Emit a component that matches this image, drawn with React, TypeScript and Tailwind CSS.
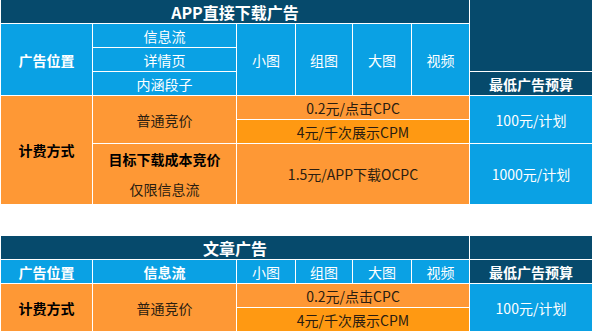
import React from 'react'

const cell = 'flex items-center justify-center text-center leading-none'
const dark = 'bg-[#064a6c] text-white'
const blue = 'bg-[#0aa1e4] text-white'
const orange = 'bg-[#fe9835] text-[#2b1d10]'
const orangeDeep = 'bg-[#ff9912] text-[#2b1d10]'

const cols = 'grid-cols-[91px_143px_58px_56px_58px_57px_122px]'

function AppDownloadTable() {
    return (
        <div className={`ml-px grid ${cols} grid-rows-[23px_23px_23px_23px_23px_23px_60px] gap-px bg-white`}>
            {/* header */}
            <div className={`${cell} ${dark} col-start-1 col-span-6 row-start-1 text-[16px] font-bold`}>APP直接下载广告</div>
            <div className={`${cell} ${dark} col-start-7 row-start-1 row-span-3`} />

            <div className={`${cell} ${blue} col-start-1 row-start-2 row-span-3 font-bold`}>广告位置</div>
            <div className={`${cell} ${blue} col-start-2 row-start-2`}>信息流</div>
            <div className={`${cell} ${blue} col-start-2 row-start-3`}>详情页</div>
            <div className={`${cell} ${blue} col-start-2 row-start-4`}>内涵段子</div>
            <div className={`${cell} ${blue} col-start-3 row-start-2 row-span-3`}>小图</div>
            <div className={`${cell} ${blue} col-start-4 row-start-2 row-span-3`}>组图</div>
            <div className={`${cell} ${blue} col-start-5 row-start-2 row-span-3`}>大图</div>
            <div className={`${cell} ${blue} col-start-6 row-start-2 row-span-3`}>视频</div>
            <div className={`${cell} ${dark} col-start-7 row-start-4 font-bold`}>最低广告预算</div>

            {/* pricing */}
            <div className={`${cell} ${orange} col-start-1 row-start-5 row-span-3 font-bold text-black`}>计费方式</div>
            <div className={`${cell} ${orange} col-start-2 row-start-5 row-span-2`}>普通竞价</div>
            <div className={`${cell} ${orange} col-start-3 col-span-4 row-start-5`}>0.2元/点击CPC</div>
            <div className={`${cell} ${orangeDeep} col-start-3 col-span-4 row-start-6`}>4元/千次展示CPM</div>
            <div className={`${cell} ${blue} col-start-7 row-start-5 row-span-2`}>100元/计划</div>

            <div className={`${cell} ${orange} col-start-2 row-start-7 flex-col gap-4`}>
                <span className="font-bold text-black leading-[14px]">目标下载成本竞价</span>
                <span className="leading-[14px]">仅限信息流</span>
            </div>
            <div className={`${cell} ${orange} col-start-3 col-span-4 row-start-7`}>1.5元/APP下载OCPC</div>
            <div className={`${cell} ${blue} col-start-7 row-start-7`}>1000元/计划</div>
        </div>
    )
}

function ArticleTable() {
    return (
        <div className={`ml-px mt-8 grid ${cols} grid-rows-[23px_23px_23px_23px] gap-px bg-white`}>
            <div className={`${cell} ${dark} col-start-1 col-span-6 row-start-1 text-[16px] font-bold`}>文章广告</div>
            <div className={`${cell} ${dark} col-start-7 row-start-1`} />

            <div className={`${cell} ${blue} col-start-1 row-start-2 font-bold`}>广告位置</div>
            <div className={`${cell} ${blue} col-start-2 row-start-2 font-bold`}>信息流</div>
            <div className={`${cell} ${blue} col-start-3 row-start-2`}>小图</div>
            <div className={`${cell} ${blue} col-start-4 row-start-2`}>组图</div>
            <div className={`${cell} ${blue} col-start-5 row-start-2`}>大图</div>
            <div className={`${cell} ${blue} col-start-6 row-start-2`}>视频</div>
            <div className={`${cell} ${dark} col-start-7 row-start-2 font-bold`}>最低广告预算</div>

            <div className={`${cell} ${orange} col-start-1 row-start-3 row-span-2 font-bold text-black`}>计费方式</div>
            <div className={`${cell} ${orange} col-start-2 row-start-3 row-span-2`}>普通竞价</div>
            <div className={`${cell} ${orange} col-start-3 col-span-4 row-start-3`}>0.2元/点击CPC</div>
            <div className={`${cell} ${orangeDeep} col-start-3 col-span-4 row-start-4`}>4元/千次展示CPM</div>
            <div className={`${cell} ${blue} col-start-7 row-start-3 row-span-2`}>100元/计划</div>
        </div>
    )
}

export default function App() {
    return (
        <div className="w-[592px] h-[331px] overflow-hidden bg-white text-[14px] font-['Noto_Sans_CJK_SC',sans-serif]">
            <AppDownloadTable />
            <ArticleTable />
        </div>
    )
}
